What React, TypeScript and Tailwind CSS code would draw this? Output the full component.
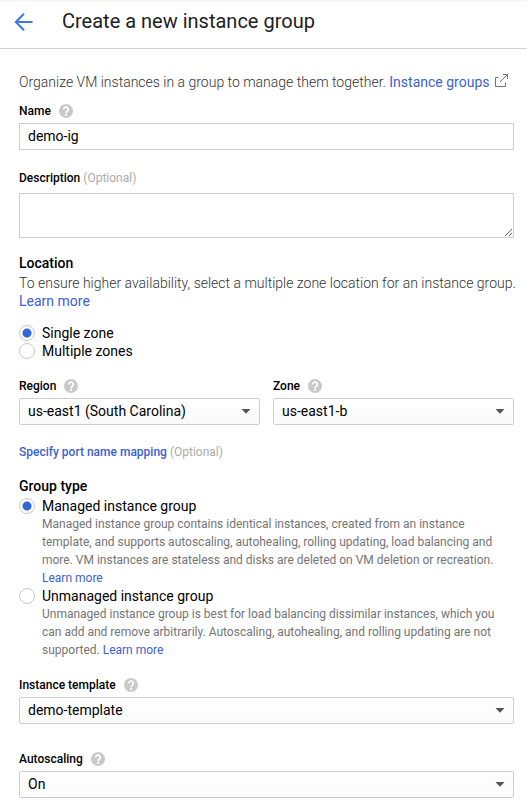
import { useId } from "react";
import type { ReactNode } from "react";

function HelpIcon() {
  return (
    <button type="button" aria-label="Help" className="block size-[14px] shrink-0">
      <svg viewBox="0 0 14 14" className="block size-[14px]">
        <circle cx="7" cy="7" r="7" fill="#c9c9c9" />
        <path
          d="M4.700 5.500a2.300 2.300 0 1 1 3.600 1.800C7.500 7.900 7 8.200 7 9.200"
          fill="none"
          stroke="#fff"
          strokeWidth="1.700"
        />
        <rect x="6.100" y="10" width="1.800" height="1.800" fill="#fff" />
      </svg>
    </button>
  );
}

function Label({ htmlFor, children, help = false }: { htmlFor: string; children: ReactNode; help?: boolean }) {
  return (
    <div className="flex items-center gap-2 text-[12px] leading-[18px]">
      <label htmlFor={htmlFor} className="font-medium text-black">
        {children}
      </label>
      {help && <HelpIcon />}
    </div>
  );
}

function Optional() {
  return <span className="font-normal text-[#ababab]">(Optional)</span>;
}

function SelectField({ label, options }: { label: string; options: string[] }) {
  const id = useId();
  return (
    <div className="min-w-0">
      <Label htmlFor={id} help>
        {label}
      </Label>
      <div className="mt-[3px] grid">
        <select
          id={id}
          className="col-start-1 row-start-1 h-[27px] w-full appearance-none rounded-[2px] border border-[#cfcfcf] bg-linear-to-b from-white to-[#fafafa] pr-7 pb-[2px] pl-2 text-[14px] leading-[18px] text-black"
        >
          {options.map((o) => (
            <option key={o}>{o}</option>
          ))}
        </select>
        <svg
          viewBox="0 0 10 5"
          className="pointer-events-none col-start-1 row-start-1 mr-[9px] h-[5px] w-[10px] self-center justify-self-end"
        >
          <path d="M0.500 0h9L5 4.800z" fill="#555" />
        </svg>
      </div>
    </div>
  );
}

function Radio({
  name,
  label,
  defaultChecked,
  children,
}: {
  name: string;
  label: string;
  defaultChecked?: boolean;
  children?: ReactNode;
}) {
  const id = useId();
  return (
    <div className="grid grid-cols-[16px_1fr] gap-x-[7px]">
      <input
        type="radio"
        id={id}
        name={name}
        defaultChecked={defaultChecked}
        className="mt-px size-4 appearance-none rounded-full border border-[#c9c9c9] bg-white checked:bg-[radial-gradient(circle,#3367d6_4px,#fff_5px)]"
      />
      <label htmlFor={id} className="text-[14px] leading-[18px] text-black">
        {label}
      </label>
      {children && <p className="col-start-2 text-[12px] leading-[18px] text-[#757575]">{children}</p>}
    </div>
  );
}

function Link({ children, className = "" }: { children: ReactNode; className?: string }) {
  return (
    <a href="#" className={`text-[#3b62d0] ${className}`}>
      {children}
    </a>
  );
}

export default function App() {
  return (
    <div className="bg-white font-[Roboto,sans-serif] text-[14px] leading-[18px] text-[#666]">
      <header className="flex h-[49px] items-center gap-7 border-t-2 border-b border-t-[#f6f6f6] border-b-[#d0d0d0] pb-2 pl-[14px]">
        <button type="button" aria-label="Back" className="mt-[2px] block">
          <svg viewBox="0 0 20 20" className="block size-5" fill="none" stroke="#3b78e7" strokeWidth="2">
            <path d="M18.500 10H2.500M10 1.800L1.800 10L10 18.200" />
          </svg>
        </button>
        <h1 className="text-[20px] leading-6 text-[#212121]">Create a new instance group</h1>
      </header>

      <main className="pt-6 pr-[13px] pb-[13px] pl-[19px]">
        <p className="-mr-[13px] font-light text-[#333]">
          Organize VM instances in a group to manage them together.{" "}
          <Link className="font-normal">
            Instance groups
            <svg
              viewBox="0 0 14 14"
              className="ml-[5px] inline-block size-[14px] align-[-1px]"
              fill="none"
              stroke="#757575"
              strokeWidth="1"
            >
              <path d="M3.500 3.500H0.500V12.500H10.500V9M8 0.500H12.500V5M12.500 0.500L5 8" />
            </svg>
          </Link>
        </p>

        <div className="mt-[11px]">
          <Label htmlFor="name" help>
            Name
          </Label>
          <input
            id="name"
            type="text"
            defaultValue="demo-ig"
            className="mt-[3px] block h-[27px] w-full border border-[#cfcfcf] px-2 pb-[2px] text-[14px] leading-[18px] text-black"
          />
        </div>

        <div className="mt-[19px]">
          <Label htmlFor="description">
            Description <Optional />
          </Label>
          <textarea
            id="description"
            className="mt-[6px] block h-[45px] w-full resize border border-[#cfcfcf] px-2 py-1 text-black"
          />
        </div>

        <section className="mt-4">
          <h2 className="font-medium text-black">Location</h2>
          <p className="-mr-[13px] mt-[2px] font-light text-[#333]">
            To ensure higher availability, select a multiple zone location for an instance group.{" "}
            <Link className="inline-block font-normal">Learn more</Link>
          </p>
          <div className="mt-[14px]">
            <Radio name="location" label="Single zone" defaultChecked />
            <Radio name="location" label="Multiple zones" />
          </div>
        </section>

        <div className="mt-[17px] grid grid-cols-2 gap-[13px]">
          <SelectField label="Region" options={["us-east1 (South Carolina)"]} />
          <SelectField label="Zone" options={["us-east1-b"]} />
        </div>

        <p className="mt-[18px] text-[12px]">
          <Link className="font-medium">Specify port name mapping</Link> <Optional />
        </p>

        <section className="mt-4">
          <h2 className="font-medium text-black">Group type</h2>
          <div className="mt-[2px]">
            <Radio name="group-type" label="Managed instance group" defaultChecked>
              Managed instance group contains identical instances, created from an instance template, and supports
              autoscaling, autohealing, rolling updating, load balancing and more. VM instances are stateless and
              disks are deleted on VM deletion or recreation. <Link className="inline-block">Learn more</Link>
            </Radio>
            <Radio name="group-type" label="Unmanaged instance group">
              Unmanaged instance group is best for load balancing dissimilar instances, which you can add and remove
              arbitrarily. Autoscaling, autohealing, and rolling updating are not supported.{" "}
              <Link className="inline-block">Learn more</Link>
            </Radio>
          </div>
        </section>

        <div className="mt-[17px] flex flex-col gap-[26px]">
          <SelectField label="Instance template" options={["demo-template"]} />
          <SelectField label="Autoscaling" options={["On"]} />
        </div>
      </main>
    </div>
  );
}
